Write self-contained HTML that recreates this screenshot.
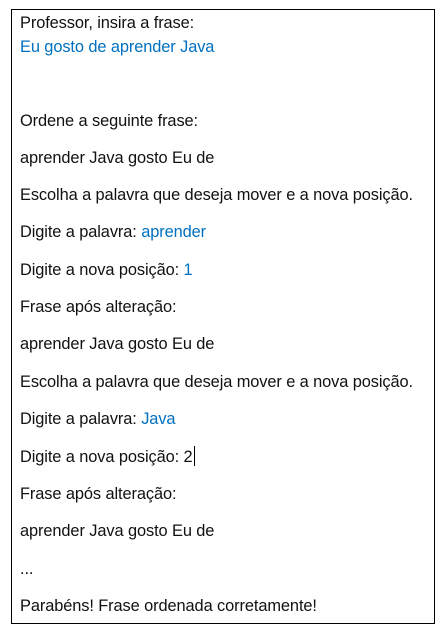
<!DOCTYPE html>
<html><head><meta charset="utf-8"><style>
html,body{margin:0;padding:0;background:#fff;width:446px;height:634px;overflow:hidden}
.box{position:absolute;left:11px;top:9px;width:422px;height:613px;border:1px solid #000}
.l{position:absolute;left:20px;font-family:"Liberation Sans",Arial,sans-serif;font-size:16.4px;color:#111;white-space:nowrap;line-height:18px;letter-spacing:-0.1px}
.b{color:#0070c0}
.cur{position:absolute;top:-2px;width:1px;height:20px;background:#000;margin-left:1px}
</style></head><body>
<div class="box"></div>
<div class="l" style="top:14px">Professor, insira a frase:</div>
<div class="l b" style="top:38px">Eu gosto de aprender Java</div>
<div class="l" style="top:112px">Ordene a seguinte frase:</div>
<div class="l" style="top:149px">aprender Java gosto Eu de</div>
<div class="l" style="top:186px">Escolha a palavra que deseja mover e a nova posição.</div>
<div class="l" style="top:223px">Digite a palavra: <span class="b">aprender</span></div>
<div class="l" style="top:261px">Digite a nova posição: <span class="b">1</span></div>
<div class="l" style="top:298px">Frase após alteração:</div>
<div class="l" style="top:335px">aprender Java gosto Eu de</div>
<div class="l" style="top:373px">Escolha a palavra que deseja mover e a nova posição.</div>
<div class="l" style="top:410px">Digite a palavra: <span class="b">Java</span></div>
<div class="l" style="top:448px">Digite a nova posição: 2<span class="cur"></span></div>
<div class="l" style="top:485px">Frase após alteração:</div>
<div class="l" style="top:522px">aprender Java gosto Eu de</div>
<div class="l" style="top:560px">...</div>
<div class="l" style="top:597px">Parabéns! Frase ordenada corretamente!</div>
</body></html>
